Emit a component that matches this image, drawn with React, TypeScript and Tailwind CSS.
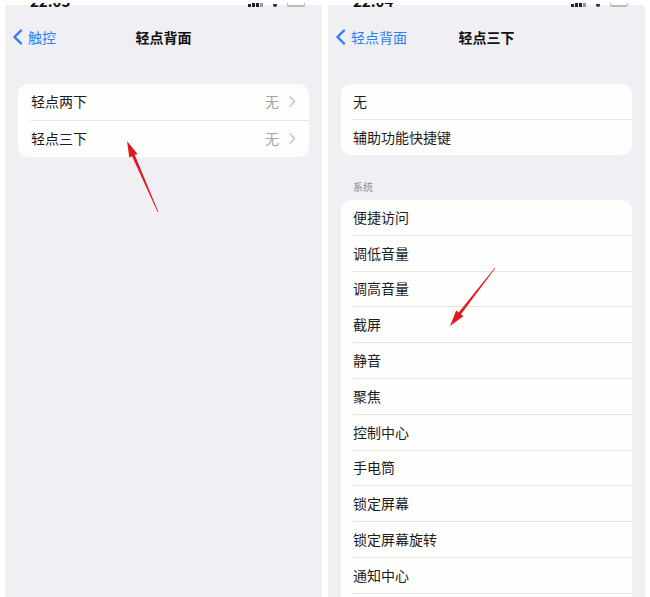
import React from 'react'

// 两个设置页并排：轻点背面 / 轻点三下
const font = { fontFamily: '"Noto Sans CJK SC", "Noto Sans", sans-serif' }

const systemActions = [
  '便捷访问',
  '调低音量',
  '调高音量',
  '截屏',
  '静音',
  '聚焦',
  '控制中心',
  '手电筒',
  '锁定屏幕',
  '锁定屏幕旋转',
  '通知中心',
]

// 状态栏只露出底部一截
const StatusBar: React.FC<{ time: string }> = ({ time }) => (
  <div className="-mt-[2px] h-[5px] overflow-hidden flex items-end justify-between pl-[25px] pr-[17px] pb-[1px]">
    <span className="text-[15px] leading-[12px] font-semibold text-[#111]">{time}</span>
    <div className="flex items-end gap-[10px]">
      <div className="flex items-end gap-[1px]">
        <div className="w-[3px] h-[3px] bg-[#222]" />
        <div className="w-[3px] h-[4px] bg-[#222]" />
        <div className="w-[3px] h-[5px] bg-[#222]" />
        <div className="w-[3px] h-[6px] bg-[#999]" />
      </div>
      <div className="w-[4px] h-[3px] bg-[#333] rounded-b-full" />
      <div className="w-[18px] h-[6px] border-b-2 border-x border-[#bbb] rounded-b-[2px]" />
    </div>
  </div>
)

const BackChevron = () => (
  <svg width="11" height="16" viewBox="0 0 11 16" fill="none">
    <path d="M9 1.5 L2.5 8 L9 14.5" stroke="#2f7cf6" strokeWidth="2.4" strokeLinecap="round" strokeLinejoin="round" />
  </svg>
)

const RowChevron = () => (
  <svg width="7" height="11" viewBox="0 0 7 11" fill="none">
    <path d="M1.2 1 L5.5 5.5 L1.2 10" stroke="#c4c4c8" strokeWidth="1.6" strokeLinecap="round" strokeLinejoin="round" />
  </svg>
)

const NavBar: React.FC<{ back: string; title: string }> = ({ back, title }) => (
  <div className="relative h-[58px] flex items-center pl-[7px]">
    <div className="flex items-center gap-[5px] text-[14px] text-[#2f7cf6]">
      <BackChevron />
      <span>{back}</span>
    </div>
    <div className="absolute inset-0 flex items-center justify-center text-[14px] font-semibold text-[#111]">
      {title}
    </div>
  </div>
)

const App: React.FC = () => {
  return (
    <div className="relative w-[650px] h-[597px] bg-white overflow-hidden" style={font}>
      <div className="flex gap-[6px] pl-[5px] pt-[5px]">
        {/* 左：轻点背面 */}
        <div className="w-[317px] h-[600px] bg-[#efeff4]">
          <StatusBar time="22:03" />
          <NavBar back="触控" title="轻点背面" />
          <div className="mt-[18px] mx-[13px] rounded-[10px] bg-[#fefefc] pl-[13px]">
            {['轻点两下', '轻点三下'].map((label, i) => (
              <div
                key={label}
                className={`h-[36.5px] flex items-center justify-between pr-[13px] ${i === 0 ? 'border-b border-[#e3e3e3]' : ''}`}
              >
                <span className="text-[14px] text-[#1c1c1e]">{label}</span>
                <div className="flex items-center gap-[10px]">
                  <span className="text-[14px] text-[#a3a3a8]">无</span>
                  <RowChevron />
                </div>
              </div>
            ))}
          </div>
        </div>

        {/* 右：轻点三下 */}
        <div className="w-[317px] h-[600px] bg-[#efeff4]">
          <StatusBar time="22:04" />
          <NavBar back="轻点背面" title="轻点三下" />
          <div className="mt-[18px] mx-[13px] rounded-[10px] bg-[#fefefc] pl-[12px]">
            <div className="h-[35.5px] flex items-center border-b border-[#e3e3e3] text-[14px] text-[#1c1c1e]">无</div>
            <div className="h-[35.5px] flex items-center text-[14px] text-[#1c1c1e]">辅助功能快捷键</div>
          </div>
          <div className="h-[45px] flex items-end pb-[7px] pl-[25px] text-[10px] leading-[12px] text-[#8e8e93]">系统</div>
          <div className="mx-[13px] rounded-t-[10px] bg-[#fefefc] pl-[12px] pb-[20px]">
            {systemActions.map(label => (
              <div
                key={label}
                className="h-[35.8px] flex items-center border-b border-[#e3e3e3] text-[14px] text-[#1c1c1e]"
              >
                {label}
              </div>
            ))}
          </div>
        </div>
      </div>

      {/* 红色标注箭头 */}
      <svg className="absolute inset-0 pointer-events-none" width="650" height="597" viewBox="0 0 650 597">
        <polygon
          points="127,141 137.5,153.9 134.8,155.1 158.4,212 157.6,212 132,156.3 129.3,157.5"
          fill="#e3191c"
        />
        <polygon
          points="450,326 463.4,316.2 461,314.3 495.2,268.2 494.8,267.8 458.6,312.5 456.2,310.6"
          fill="#e3191c"
        />
      </svg>
    </div>
  )
}

export default App
